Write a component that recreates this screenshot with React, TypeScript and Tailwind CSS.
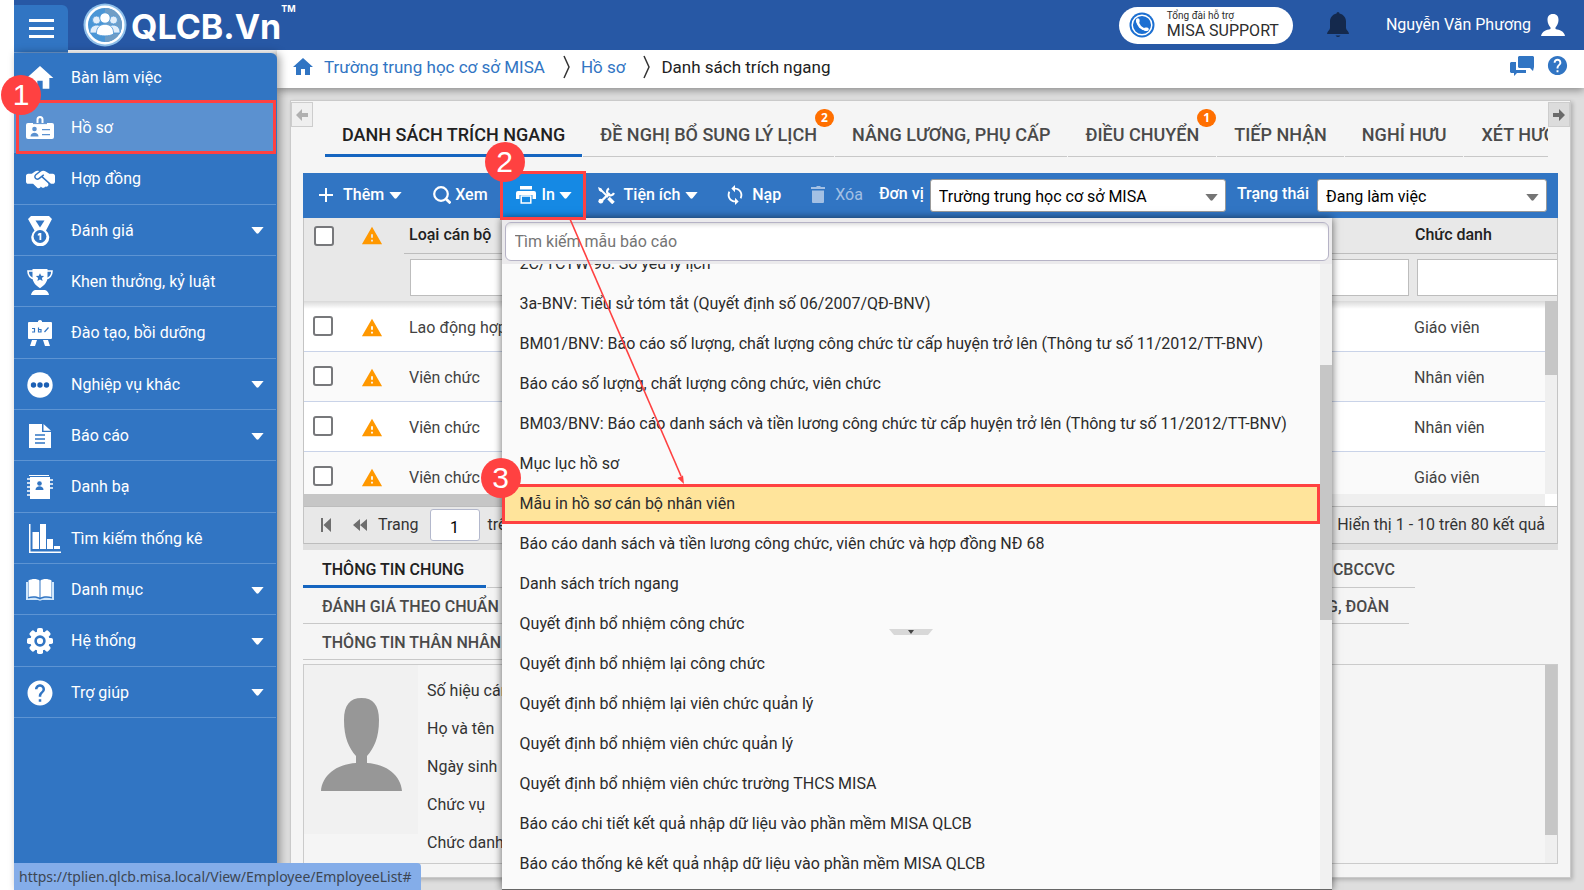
import type { ReactNode } from "react";
import { MdHome, MdWarning, MdHelp, MdAutorenew, MdDelete } from "react-icons/md";
import { FaHandshakeSimple } from "react-icons/fa6";

const NAVY = "#3175c3";

function Caret({ className = "" }: { className?: string }) {
  return (
    <svg viewBox="0 0 14 8" className={"h-[7px] w-[13px] shrink-0 " + className} aria-hidden="true">
      <path d="M0 0h14L8.2 7.2q-1.2 1-2.4 0z" fill="currentColor" />
    </svg>
  );
}

function BadgeIcon() {
  return (
    <svg viewBox="0 0 28 24" className="h-6 w-7">
      <path fill="#fff" d="M2 7h24a2 2 0 0 1 2 2v12a2 2 0 0 1-2 2H2a2 2 0 0 1-2-2V9a2 2 0 0 1 2-2z" />
      <path fill="none" stroke="#fff" strokeWidth="2" d="M11.5 8V3.5a2.5 2.5 0 0 1 5 0V8" />
      <path fill="none" stroke="#5b91d0" strokeWidth="1" d="M7 7.6h14" />
      <circle cx="8.5" cy="13" r="2.3" fill="#5b91d0" />
      <path fill="#5b91d0" d="M4.5 20.5c0-5 8-5 8 0zM16 13h8v1.300h-8zM16 18h8v1.300h-8z" />
    </svg>
  );
}

function MedalIcon() {
  return (
    <svg viewBox="0 0 24 30" className="h-[30px] w-6">
      <path fill="#fff" d="M3 0h18l3 3-6 11.500a9 9 0 1 1-11.500 0L0 3z" />
      <path fill={NAVY} d="M7.500 4.500h9L12 11.500z" />
      <circle cx="12" cy="20.500" r="6.400" fill={NAVY} />
      <path fill="#fff" d="M11.300 17h2v7h-1.800v-4.800l-1.700.6V18z" />
    </svg>
  );
}

function TrophyIcon() {
  return (
    <svg viewBox="0 0 26 26" className="h-[26px] w-[26px]">
      <path fill="none" stroke="#fff" strokeWidth="1.600" d="M6 2H1c0 5 2 7 6.500 8M20 2h5c0 5-2 7-6.500 8" />
      <path fill="#fff" d="M5.500 0h15v8c0 5-3 8-6.500 10.500l-1 .8-1-.8C8.500 16 5.500 13 5.500 8zM8 21h10c2.500 1 3.500 2.500 4 5H4c.5-2.500 1.500-4 4-5z" />
      <path fill={NAVY} d="m13 4.200 1.200 2.600 2.900.3-2.200 1.900.7 2.900-2.600-1.500-2.600 1.500.7-2.900-2.200-1.900 2.900-.3z" />
    </svg>
  );
}

function EaselIcon() {
  return (
    <svg viewBox="0 0 24 26" className="h-[26px] w-6">
      <path fill="#fff" d="M10 2V1q2-2 4 0v1h9a1 1 0 0 1 1 1v15a1 1 0 0 1-1 1H1a1 1 0 0 1-1-1V3a1 1 0 0 1 1-1zM4 20h5l-2 6H2zM15 20h5l2 6h-5z" />
      <path fill="none" stroke={NAVY} strokeWidth="1.200" d="M4 8.500h2.500v3.500H4M10.500 7.500V12h2.500V9.500h-2.500M16.500 12l4-4.500" />
    </svg>
  );
}

function DotsIcon() {
  return (
    <svg viewBox="0 0 26 26" className="h-[26px] w-[26px]">
      <circle cx="13" cy="13" r="12.700" fill="#fff" />
      <circle cx="6.500" cy="13" r="2.700" fill="#1b5fb4" />
      <circle cx="13" cy="13" r="2.700" fill="#1b5fb4" />
      <circle cx="19.500" cy="13" r="2.700" fill="#1b5fb4" />
    </svg>
  );
}

function ReportIcon() {
  return (
    <svg viewBox="0 0 22 24" className="h-6 w-[22px]">
      <path fill="#fff" d="M0 0h13v8h9v16H0zM14.500 0 22 6.800h-7.500z" />
      <path stroke={NAVY} strokeWidth="1.500" d="M6 11h10M6 15h10M6 19h10" />
    </svg>
  );
}

function ContactsIcon() {
  return (
    <svg viewBox="0 0 26 24" className="h-6 w-[26px]">
      <path fill="#fff" d="M3 2h20v22H3zM2 0h20v1H2z" />
      <path stroke="#fff" strokeWidth="1.300" d="M0 4h3M0 8h3M0 12h3M0 16h3M0 20h3M23 5h3M23 9h3M23 13h3" />
      <circle cx="12.500" cy="8.500" r="2.300" fill={NAVY} />
      <path fill={NAVY} d="M8.500 15c0-5 8-5 8 0z" />
    </svg>
  );
}

function ChartIcon() {
  return (
    <svg viewBox="-10 0 42 29" className="h-[29px] w-[42px] shrink-0">
      <path fill="#fff" d="M0 0h1.500v27.500H32V29H0zM3.500 8H10v17H3.500zM11 0h6v25h-6zM18 15h6v10h-6zM25 22h6v3h-6z" />
    </svg>
  );
}

function BookIcon() {
  return (
    <svg viewBox="0 0 28 22" className="h-[22px] w-7">
      <path fill="#cfe6fb" d="M0 3h2v16.500c4-1 9-1 12 1 3-2 8-2 12-1V3h2v18H16q-2 1.500-4 0H0z" />
      <path fill="#fff" d="M2.500 1.500C6-.5 11-.5 13.500 1.500v17c-3-1.500-8-1.500-11-.5zM14.500 1.500c2.500-2 7.500-2 11 0V18c-3-1-8-1-11 .5z" />
    </svg>
  );
}

function GearIcon() {
  const teeth = [0, 45, 90, 135, 180, 225, 270, 315];
  return (
    <svg viewBox="0 0 28 28" className="h-7 w-7">
      {teeth.map((a) => (
        <rect key={a} x="11" y="1" width="6" height="8" rx="1.800" fill="#fff" transform={`rotate(${a} 14 14)`} />
      ))}
      <circle cx="14" cy="14" r="9.800" fill="#fff" />
      <circle cx="14" cy="14" r="4.400" fill="none" stroke={NAVY} strokeWidth="2.600" />
    </svg>
  );
}

type NavItem = { label: string; icon: ReactNode; sub?: boolean; active?: boolean };

const NAV: NavItem[] = [
  { label: "Bàn làm việc", icon: <MdHome className="h-8 w-8" /> },
  { label: "Hồ sơ", icon: <BadgeIcon />, active: true },
  { label: "Hợp đồng", icon: <FaHandshakeSimple className="h-[29px] w-[29px]" /> },
  { label: "Đánh giá", icon: <MedalIcon />, sub: true },
  { label: "Khen thưởng, kỷ luật", icon: <TrophyIcon /> },
  { label: "Đào tạo, bồi dưỡng", icon: <EaselIcon /> },
  { label: "Nghiệp vụ khác", icon: <DotsIcon />, sub: true },
  { label: "Báo cáo", icon: <ReportIcon />, sub: true },
  { label: "Danh bạ", icon: <ContactsIcon /> },
  { label: "Tìm kiếm thống kê", icon: <ChartIcon /> },
  { label: "Danh mục", icon: <BookIcon />, sub: true },
  { label: "Hệ thống", icon: <GearIcon />, sub: true },
  { label: "Trợ giúp", icon: <MdHelp className="h-[30px] w-[30px]" />, sub: true },
];

const TABS: { label: string; count?: number }[] = [
  { label: "DANH SÁCH TRÍCH NGANG" },
  { label: "ĐỀ NGHỊ BỔ SUNG LÝ LỊCH", count: 2 },
  { label: "NÂNG LƯƠNG, PHỤ CẤP" },
  { label: "ĐIỀU CHUYỂN", count: 1 },
  { label: "TIẾP NHẬN" },
  { label: "NGHỈ HƯU" },
  { label: "XÉT HƯỞNG" },
];

const REPORTS = [
  "2C/TCTW-98: Sơ yếu lý lịch",
  "3a-BNV: Tiểu sử tóm tắt (Quyết định số 06/2007/QĐ-BNV)",
  "BM01/BNV: Báo cáo số lượng, chất lượng công chức từ cấp huyện trở lên (Thông tư số 11/2012/TT-BNV)",
  "Báo cáo số lượng, chất lượng công chức, viên chức",
  "BM03/BNV: Báo cáo danh sách và tiền lương công chức từ cấp huyện trở lên (Thông tư số 11/2012/TT-BNV)",
  "Mục lục hồ sơ",
  "Mẫu in hồ sơ cán bộ nhân viên",
  "Báo cáo danh sách và tiền lương công chức, viên chức và hợp đồng NĐ 68",
  "Danh sách trích ngang",
  "Quyết định bổ nhiệm công chức",
  "Quyết định bổ nhiệm lại công chức",
  "Quyết định bổ nhiệm lại viên chức quản lý",
  "Quyết định bổ nhiệm viên chức quản lý",
  "Quyết định bổ nhiệm viên chức trường THCS MISA",
  "Báo cáo chi tiết kết quả nhập dữ liệu vào phần mềm MISA QLCB",
  "Báo cáo thống kê kết quả nhập dữ liệu vào phần mềm MISA QLCB",
];
const SELECTED = 6;

const ROWS = [
  ["Lao động hợp đồng", "Giáo viên"],
  ["Viên chức", "Nhân viên"],
  ["Viên chức", "Nhân viên"],
  ["Viên chức", "Giáo viên"],
];

function Step({ n, className }: { n: number; className: string }) {
  return (
    <span className={"absolute z-40 flex h-10 w-10 items-center justify-center rounded-full bg-[#ff4141] font-['Liberation_Sans',sans-serif] text-[30px] leading-none text-white " + className}>
      {n}
    </span>
  );
}

function Header() {
  return (
    <header className="relative z-10 flex h-[50px] shrink-0 items-center bg-[#2758a5] pr-[19px]">
      <button aria-label="Menu" className="flex h-12 w-[54px] translate-y-[4px] flex-col items-center justify-center gap-[5px] rounded-tr-md border-b border-[#6f9cd4] bg-[#3175c3]">
        <span className="h-[3px] w-[25px] bg-white" />
        <span className="h-[3px] w-[25px] bg-white" />
        <span className="h-[3px] w-[25px] bg-white" />
      </button>
      <a href="#" aria-label="QLCB.VN" className="ml-[15px] flex h-full items-center text-white">
        <svg viewBox="0 0 44 44" className="h-11 w-11">
          <circle cx="22" cy="22" r="21.500" fill="#8fc0ea" />
          <circle cx="22" cy="22" r="19.500" fill="#fff" />
          <circle cx="22" cy="22" r="17" fill="#4a96d6" />
          <path d="M22 5a17 17 0 0 1 0 34z" fill="#6f9dc6" />
          <g fill="#e2eefa" stroke="#4a96d6" strokeWidth=".8">
            <circle cx="13.500" cy="17" r="4" />
            <circle cx="30.500" cy="17" r="4" />
            <path d="M7 29c0-9 13-9 13-1v2H7zM37 29c0-9-13-9-13-1v2h13z" />
            <circle cx="22" cy="15" r="5.200" fill="#fff" />
            <path fill="#fff" d="M13.500 31c-1-13 18-13 17 0-4 2.500-13 2.500-17 0z" />
          </g>
        </svg>
        <span className="ml-1 pt-1 font-['Inter',sans-serif] text-[34px] leading-none font-bold">QLCB.Vn</span>
        <span className="self-start pt-1 font-['Inter',sans-serif] text-[9px] leading-none font-bold">TM</span>
      </a>
      <div className="ml-auto flex h-[37px] items-center rounded-full bg-white pr-[14px] pl-[10px]">
        <svg viewBox="0 0 26 26" className="h-[26px] w-[26px]">
          <circle cx="13" cy="13" r="12.500" fill="#1c6fd1" />
          <circle cx="13" cy="13" r="9.800" fill="none" stroke="#fff" strokeWidth="1.500" />
          <path fill="none" stroke="#fff" strokeWidth="2.600" strokeLinecap="round" d="M8.500 8.500c0 5 4 9 9 9" />
          <path stroke="#fff" strokeWidth="3.600" strokeLinecap="round" d="M8.800 8v1.500M16.500 17.300H18" />
        </svg>
        <span className="ml-3 flex flex-col text-[#2d2d2d]">
          <span className="text-[10px] leading-[12px]">Tổng đài hỗ trợ</span>
          <span className="text-[16px] leading-[18px]">MISA SUPPORT</span>
        </span>
      </div>
      <button aria-label="Thông báo" className="ml-[33px]">
        <svg viewBox="0 0 24 26" className="h-[26px] w-6">
          <path fill="#14294d" d="M10.500 1.500a1.500 1.500 0 0 1 3 0c4 1 6.500 4 6.500 8v6.500c0 2 3 3.500 3 6H1c0-2.500 3-4 3-6V9.500c0-4 2.500-7 6.500-8zM9.500 23.500h5q-2.500 3-5 0z" />
        </svg>
      </button>
      <a href="#" className="ml-9 flex items-center gap-[10px] text-white">
        <span>Nguyễn Văn Phương</span>
        <svg viewBox="0 0 24 22" className="h-[22px] w-6">
          <path fill="#fff" d="M12 0c4 0 5.500 2.500 5.500 6 0 3.500-1.500 5.500-3 7.500v1.500c4 1 8.500 2 9.500 7H0c1-5 5.500-6 9.500-7v-1.500c-1.500-2-3-4-3-7.500C6.500 2.500 8 0 12 0z" />
        </svg>
      </a>
    </header>
  );
}

function Sidebar() {
  return (
    <aside className="relative z-10 mt-[3px] w-[263px] shrink-0 rounded-tr-md bg-[#3175c3] shadow-[3px_0_8px_rgba(0,0,0,0.35)]">
      <ul className="flex h-[665px] flex-col pr-px text-white">
        {NAV.map((item, i) => (
          <li key={item.label} className={i === 0 ? "h-[49px] border-b border-[#5d94d3]" : "relative min-h-0 flex-1 border-b border-[#5d94d3]"}>
            <a href="#" className={"flex h-full items-center pt-[2px] pr-3 " + (item.active ? "bg-[#5b91d0]" : "")}>
              <span className="ml-[10px] flex w-8 shrink-0 justify-center">{item.icon}</span>
              <span className="ml-[15px] flex-1 whitespace-nowrap">{item.label}</span>
              {item.sub && <Caret />}
            </a>
            {item.active && (
              <>
                <span className="absolute -top-[2px] right-0 -bottom-[2px] left-[2px] border-[3px] border-[#ff4141]" />
                <Step n={1} className="-top-[27px] -left-[13px]" />
              </>
            )}
          </li>
        ))}
      </ul>
    </aside>
  );
}

function Chevron() {
  return (
    <svg viewBox="0 0 8 24" className="mr-[10px] ml-[18px] h-6 w-2" aria-hidden="true">
      <path d="M1 1l5 11-5 11" fill="none" stroke="#333" strokeWidth="1.500" />
    </svg>
  );
}

function Breadcrumb() {
  return (
    <nav className="relative flex h-[38px] shrink-0 items-center bg-white pr-[15px] pb-1 pl-[14px] text-[17px] text-[#3175c3] shadow-[0_2px_8px_rgba(0,0,0,0.4)]">
      <a href="#" aria-label="Trang chủ"><MdHome className="h-6 w-6" /></a>
      <a href="#" className="ml-[9px]">Trường trung học cơ sở MISA</a>
      <Chevron />
      <a href="#">Hồ sơ</a>
      <Chevron />
      <span className="text-[#212121]">Danh sách trích ngang</span>
      <div className="ml-auto flex items-center gap-3 self-start pt-1">
        <a href="#" aria-label="Trao đổi">
          <svg viewBox="0 0 24 20" className="h-5 w-6">
            <path fill="#3175c3" d="M9 0h14l1 1v10l-1 4-3-3H9l-1-1V1zM1 6h5v8h10v3H7l-3 3v-3H1l-1-1V7z" />
          </svg>
        </a>
        <a href="#" aria-label="Trợ giúp"><MdHelp className="h-[23px] w-[23px]" /></a>
      </div>
    </nav>
  );
}

function ScrollArrow({ left }: { left?: boolean }) {
  return (
    <button
      aria-label={left ? "Cuộn trái" : "Cuộn phải"}
      className={"mt-px flex h-[25px] w-[22px] shrink-0 items-center justify-center border border-[#cdcdcd] " + (left ? "bg-[#efefef] text-[#b0b0b0]" : "bg-[#dcdcdc] text-[#6a6a6a]")}
    >
      <svg viewBox="0 0 12 12" className="h-3 w-3">
        <path fill="currentColor" d={left ? "M6 0v4h6v4H6v4L0 6z" : "M6 0v4H0v4h6v4l6-6z"} />
      </svg>
    </button>
  );
}

function Tabs() {
  return (
    <div className="flex h-[72px] shrink-0">
      <ScrollArrow left />
      <ul className="ml-3 flex h-[56px] min-w-0 flex-1 gap-px overflow-hidden text-[18px] font-medium">
        {TABS.map((tab, i) => (
          <li key={tab.label} className="relative shrink-0">
            <a
              href="#"
              className={"flex h-full items-center px-[17px] whitespace-nowrap " + (i === 0 ? "border-b-[3px] border-[#1565c0] pt-[15px] text-[#212121]" : "border-b border-[#c8c8c8] pt-[13px] text-[#4a4a4a]")}
            >
              {tab.label}
            </a>
            {tab.count && (
              <span className="absolute top-2 right-0 flex h-[18px] w-[19px] items-center justify-center rounded-full bg-[#ff6f00] font-['Open_Sans',sans-serif] text-[12px] font-bold text-white">
                {tab.count}
              </span>
            )}
          </li>
        ))}
      </ul>
      <ScrollArrow />
    </div>
  );
}

function PrintMenu() {
  return (
    <div className="absolute top-full left-0 z-20 flex h-[calc(100vh-218px)] w-[830px] flex-col border-b border-[#666] bg-[#fafafa] font-normal text-[#2b2b2b] shadow-[0_0_8px_rgba(0,0,0,0.6)]">
      <div className="bg-[#ebeaec] px-[3px] pt-1 pb-[3px]">
        <input
          aria-label="Tìm kiếm mẫu báo cáo"
          placeholder="Tìm kiếm mẫu báo cáo"
          className="block h-[39px] w-full rounded-md border border-[#b6b3c6] bg-white px-[9px] shadow-[inset_0_5px_5px_-4px_rgba(0,0,0,0.2)] placeholder:text-[#757575]"
        />
      </div>
      <div className="flex min-h-0 flex-1">
        <ul className="min-w-0 flex-1 overflow-hidden">
          {REPORTS.map((r, i) => (
            <li key={r} className={i === 0 ? "-mt-5" : ""}>
              <button
                className={"flex h-10 w-full items-center text-left whitespace-nowrap " + (i === SELECTED ? "border-[3px] border-[#ff4141] bg-[#ffe49b] px-[15px]" : "px-[18px]")}
              >
                {r}
              </button>
            </li>
          ))}
        </ul>
        <div className="w-3 bg-[#f1f1f1] pt-[101px]">
          <div className="h-[255px] bg-[#c6c6c6]" />
        </div>
      </div>
      <Step n={3} className="top-[240px] -left-[21px]" />
    </div>
  );
}

function Select({ id, value, className }: { id: string; value: string; className: string }) {
  return (
    <span className={"relative flex " + className}>
      <select id={id} className="h-[33px] w-full appearance-none rounded-[3px] border border-[#9a9a9a] bg-white px-2 pt-[3px] text-black">
        <option>{value}</option>
      </select>
      <Caret className="pointer-events-none absolute top-[15px] right-[8px] text-[#757575]" />
    </span>
  );
}

function Toolbar() {
  return (
    <div className="relative flex h-[45px] shrink-0 items-center bg-[#3175c3] pr-[11px] font-medium text-white">
      <button className="ml-4 flex items-center pb-px">
        <svg viewBox="0 0 14 14" className="h-[14px] w-[14px]"><path fill="#fff" d="M6 0h2v6h6v2H8v6H6V8H0V6h6z" /></svg>
        <span className="ml-[10px]">Thêm</span>
        <Caret className="ml-[5px]" />
      </button>
      <button className="ml-[31px] flex items-center pb-px">
        <svg viewBox="0 0 18 18" className="h-[18px] w-[18px]">
          <circle cx="8" cy="8" r="6.800" fill="none" stroke="#fff" strokeWidth="2.200" />
          <path d="M12.500 12.500l5 4.800" stroke="#fff" strokeWidth="2.800" />
        </svg>
        <span className="ml-[4px]">Xem</span>
      </button>
      <div className="relative ml-[14px] h-full">
        <button className="flex h-full w-[82px] items-center bg-[#1589e4] pb-px pl-[14px]">
          <svg viewBox="0 0 20 18" className="h-[18px] w-5">
            <path fill="#fff" d="M4 0h12v3.500H4zM2 5h16a2 2 0 0 1 2 2v6h-3.500V9h-13v4H0V7a2 2 0 0 1 2-2z" />
            <path fill="none" stroke="#fff" strokeWidth="1.500" d="M5.200 10h9.600v7H5.200z" />
          </svg>
          <span className="ml-[6px]">In</span>
          <Caret className="ml-[4px]" />
        </button>
        <span className="pointer-events-none absolute -inset-[2px] z-30 border-[3px] border-[#ff4141]" />
        <Step n={2} className="-top-[31px] -left-[17px]" />
        <PrintMenu />
      </div>
      <button className="ml-[14px] flex items-center pb-px">
        <svg viewBox="0 0 17 17" className="h-[17px] w-[17px]">
          <g fill="none" stroke="#fff">
            <path strokeWidth="1.800" d="M2 2l8 8" />
            <path strokeWidth="3.600" d="M10.500 11l5 5" />
            <path strokeWidth="2.400" d="M2 15.500 11.500 6" />
            <path strokeWidth="2.200" d="M11 1.500a3.600 3.600 0 1 0 5 4.500" />
          </g>
          <path fill="#fff" d="M0 0l3.500 1.500 1 2.500-1.500 1L1 3.500z" />
          <circle cx="2.800" cy="14.200" r="2.400" fill="#fff" />
        </svg>
        <span className="ml-[9px]">Tiện ích</span>
        <Caret className="ml-[5px]" />
      </button>
      <button className="ml-[26px] flex items-center pb-px">
        <MdAutorenew className="h-[22px] w-[22px] -scale-x-100" />
        <span className="ml-[6px]">Nạp</span>
      </button>
      <button disabled className="ml-[26px] flex items-center pb-px text-[#a3c0e4]">
        <svg viewBox="0 0 22 22" className="h-[22px] w-[22px]">
          <path fill="currentColor" d="M4 3h5l1-1h3l1 1h4v2H4zM5 6.500h12V18a1 1 0 0 1-1 1H6a1 1 0 0 1-1-1z" />
        </svg>
        <span className="ml-[6px] font-normal">Xóa</span>
      </button>
      <label htmlFor="unit" className="ml-4 pb-[3px]">Đơn vị</label>
      <Select id="unit" value="Trường trung học cơ sở MISA" className="ml-[6px] min-w-0 flex-1 font-normal" />
      <label htmlFor="status" className="ml-[11px] pb-[3px]">Trạng thái</label>
      <Select id="status" value="Đang làm việc" className="ml-2 w-[230px] font-normal" />
    </div>
  );
}

function Check({ label }: { label: string }) {
  return <input type="checkbox" aria-label={label} className="block h-5 w-5 appearance-none rounded-[3px] border-2 border-[#77787b] bg-white" />;
}

function Grid() {
  return (
    <div className="shrink-0 border-x border-[#c4c4c4]">
      <div className="relative h-[276px] overflow-hidden">
        <table className="w-full table-fixed border-collapse text-left">
          <colgroup>
            <col className="w-[42px]" />
            <col className="w-[58px]" />
            <col className="w-[200px]" />
            <col />
            <col className="w-[144px]" />
          </colgroup>
          <thead className="bg-[#e8e8e8] text-[#212121]">
            <tr className="h-[35px]">
              <th className="pl-[10px]"><Check label="Chọn tất cả" /></th>
              <th className="pl-[15px] text-[#ff9800]"><MdWarning className="h-[22px] w-[22px]" /></th>
              <th className="border-b border-[#bdbdbd] pl-[5px] font-medium">Loại cán bộ</th>
              <th className="border-b border-[#bdbdbd]" />
              <th className="border-b border-[#bdbdbd] pl-[2px] font-medium">Chức danh</th>
            </tr>
            <tr className="h-12">
              <th />
              <th />
              <th className="px-[6px]"><input aria-label="Lọc loại cán bộ" className="block h-[37px] w-full border border-[#bdbdbd] bg-white" /></th>
              <th className="pr-[4px] pl-[6px]"><input aria-label="Lọc đơn vị" className="block h-[37px] w-full border border-[#bdbdbd] bg-white" /></th>
              <th className="pl-[4px]"><input aria-label="Lọc chức danh" className="block h-[37px] w-full border border-r-0 border-[#bdbdbd] bg-white" /></th>
            </tr>
          </thead>
          <tbody className="text-[#424242]">
            {ROWS.map(([kind, title], i) => (
              <tr key={i} className={"h-[50px] border-b border-[#c9d3e8] " + (i % 2 ? "bg-[#fafafa]" : "bg-white")}>
                <td className="pl-[9px]"><Check label={`Chọn dòng ${i + 1}`} /></td>
                <td className="pt-1 pl-[15px] text-[#ff9800]"><MdWarning className="h-[22px] w-[22px]" /></td>
                <td className="pt-1 pl-[5px]">{kind}</td>
                <td />
                <td className="pt-1 pl-px">{title}</td>
              </tr>
            ))}
          </tbody>
        </table>
        <div className="absolute inset-x-0 top-[83px] h-2 bg-linear-to-b from-black/15 to-transparent" />
        <div className="absolute top-[83px] right-0 bottom-0 w-3 bg-[#efefef]">
          <div className="h-[74px] bg-[#c6c6c6]" />
        </div>
      </div>
      <div className="flex h-3 bg-[#efefef]">
        <div className="w-1/2 bg-[#c6c6c6]" />
        <div className="ml-auto w-3 bg-white" />
      </div>
      <div className="flex h-[38px] items-center border-y border-[#bdbdbd] bg-[#e8e8e8] pr-[12px] pl-[17px] text-[#333]">
        <button aria-label="Trang đầu">
          <svg viewBox="0 0 10 14" className="h-[14px] w-[10px]"><path fill="#6e6e6e" d="M0 0h2v14H0zM10 0v14L2.500 7z" /></svg>
        </button>
        <button aria-label="Trang trước" className="ml-[22px]">
          <svg viewBox="0 0 14 14" className="h-[14px] w-[14px]"><path fill="#6e6e6e" d="M7 1v12L0 7zM14 1v12L7 7z" /></svg>
        </button>
        <label htmlFor="page" className="ml-[11px]">Trang</label>
        <input id="page" defaultValue="1" className="ml-[11px] h-8 w-[50px] rounded-[3px] border border-[#b3b8cc] bg-white pt-1 text-center text-black" />
        <span className="ml-2">trên 8</span>
        <span className="ml-auto">Hiển thị 1 - 10 trên 80 kết quả</span>
      </div>
    </div>
  );
}

function SubTabs() {
  const tab = "flex items-center border-b border-[#c8c8c8] pt-[2px] whitespace-nowrap";
  return (
    <div className="shrink-0 font-medium text-[#4a4a4a]">
      <div className="mr-[143px] flex h-[38px] gap-px">
        <a href="#" className="flex w-[183px] items-center border-b-[3px] border-[#1565c0] pt-1 pl-[19px] text-[#212121]">THÔNG TIN CHUNG</a>
        <a href="#" className={tab + " flex-1 justify-end pr-5"}>CBCCVC</a>
      </div>
      <div className="mr-[149px] flex h-9 gap-px">
        <a href="#" className={tab + " w-[400px] pl-[19px]"}>ĐÁNH GIÁ THEO CHUẨN</a>
        <a href="#" className={tab + " flex-1 justify-end pr-5"}>ĐẢNG, ĐOÀN</a>
      </div>
      <div className="flex h-9">
        <a href="#" className={tab + " w-[300px] pl-[19px]"}>THÔNG TIN THÂN NHÂN</a>
      </div>
    </div>
  );
}

function Details() {
  return (
    <section className="mt-1 flex min-h-0 flex-1 border border-[#cbcbcb] text-[#333]">
      <div className="flex h-[169px] w-[114px] justify-center bg-[#f1f1f1] pt-[33px]">
        <svg viewBox="0 0 81 93" className="h-[93px] w-[81px]">
          <path fill="#979797" d="M40.500 0C52 0 58 7 58 22c0 18-5 28-12 36v7c20 1 34 13 35 28H0c1-15 15-27 35-28v-7c-7-8-12-18-12-36C23 7 29 0 40.500 0z" />
        </svg>
      </div>
      <dl className="min-w-0 flex-1 pt-[7px] pl-[9px]">
        {["Số hiệu cán bộ", "Họ và tên", "Ngày sinh", "Chức vụ", "Chức danh"].map((t) => (
          <dt key={t} className="flex h-[38px] items-center">{t}</dt>
        ))}
      </dl>
      <div className="w-3 bg-[#efefef]">
        <div className="h-[170px] bg-[#c6c6c6]" />
      </div>
    </section>
  );
}

export default function App() {
  return (
    <div className="relative flex h-screen flex-col overflow-hidden bg-white pl-[14px] font-['Roboto',sans-serif] text-[16px] leading-6">
      <Header />
      <div className="flex min-h-0 flex-1">
        <Sidebar />
        <main className="flex min-w-0 flex-1 flex-col bg-[#dedede]">
          <Breadcrumb />
          <div className="flex min-h-0 flex-1 flex-col px-[13px] pt-3 pb-3">
            <div className="flex min-h-0 flex-1 flex-col border border-[#cacaca] bg-[#f5f5f5] shadow-[2px_2px_4px_rgba(0,0,0,0.2)]">
              <Tabs />
              <div className="flex min-h-0 flex-1 flex-col px-[12px] pb-[13px]">
                <Toolbar />
                <Grid />
                <div className="h-[6px] shrink-0 bg-[#dfdfdf]" />
                <SubTabs />
                <Details />
              </div>
            </div>
          </div>
        </main>
      </div>

      <svg viewBox="0 0 116 268" className="pointer-events-none absolute top-[218px] left-[569px] z-40 h-[268px] w-[116px]">
        <path d="M1 1 112 258" stroke="#ff4141" strokeWidth="1.600" />
        <path d="M115 266l-6.500-6 5.500-2.500z" fill="#ff4141" />
      </svg>
      <svg viewBox="0 0 44 6" className="absolute top-[629px] left-[889px] z-40 h-[6px] w-[44px]">
        <path d="M0 0h44l-5 6H5z" fill="#d8d8d8" />
        <path d="M19 1h6l-3 4z" fill="#444" />
      </svg>
      <div className="absolute bottom-0 left-[14px] z-40 flex h-[27px] items-center rounded-tr bg-[#84ade9] px-[5px] pr-[10px] font-['Noto_Sans',sans-serif] text-[14px] text-[#3c4653]">
        https://tplien.qlcb.misa.local/View/Employee/EmployeeList#
      </div>
    </div>
  );
}
